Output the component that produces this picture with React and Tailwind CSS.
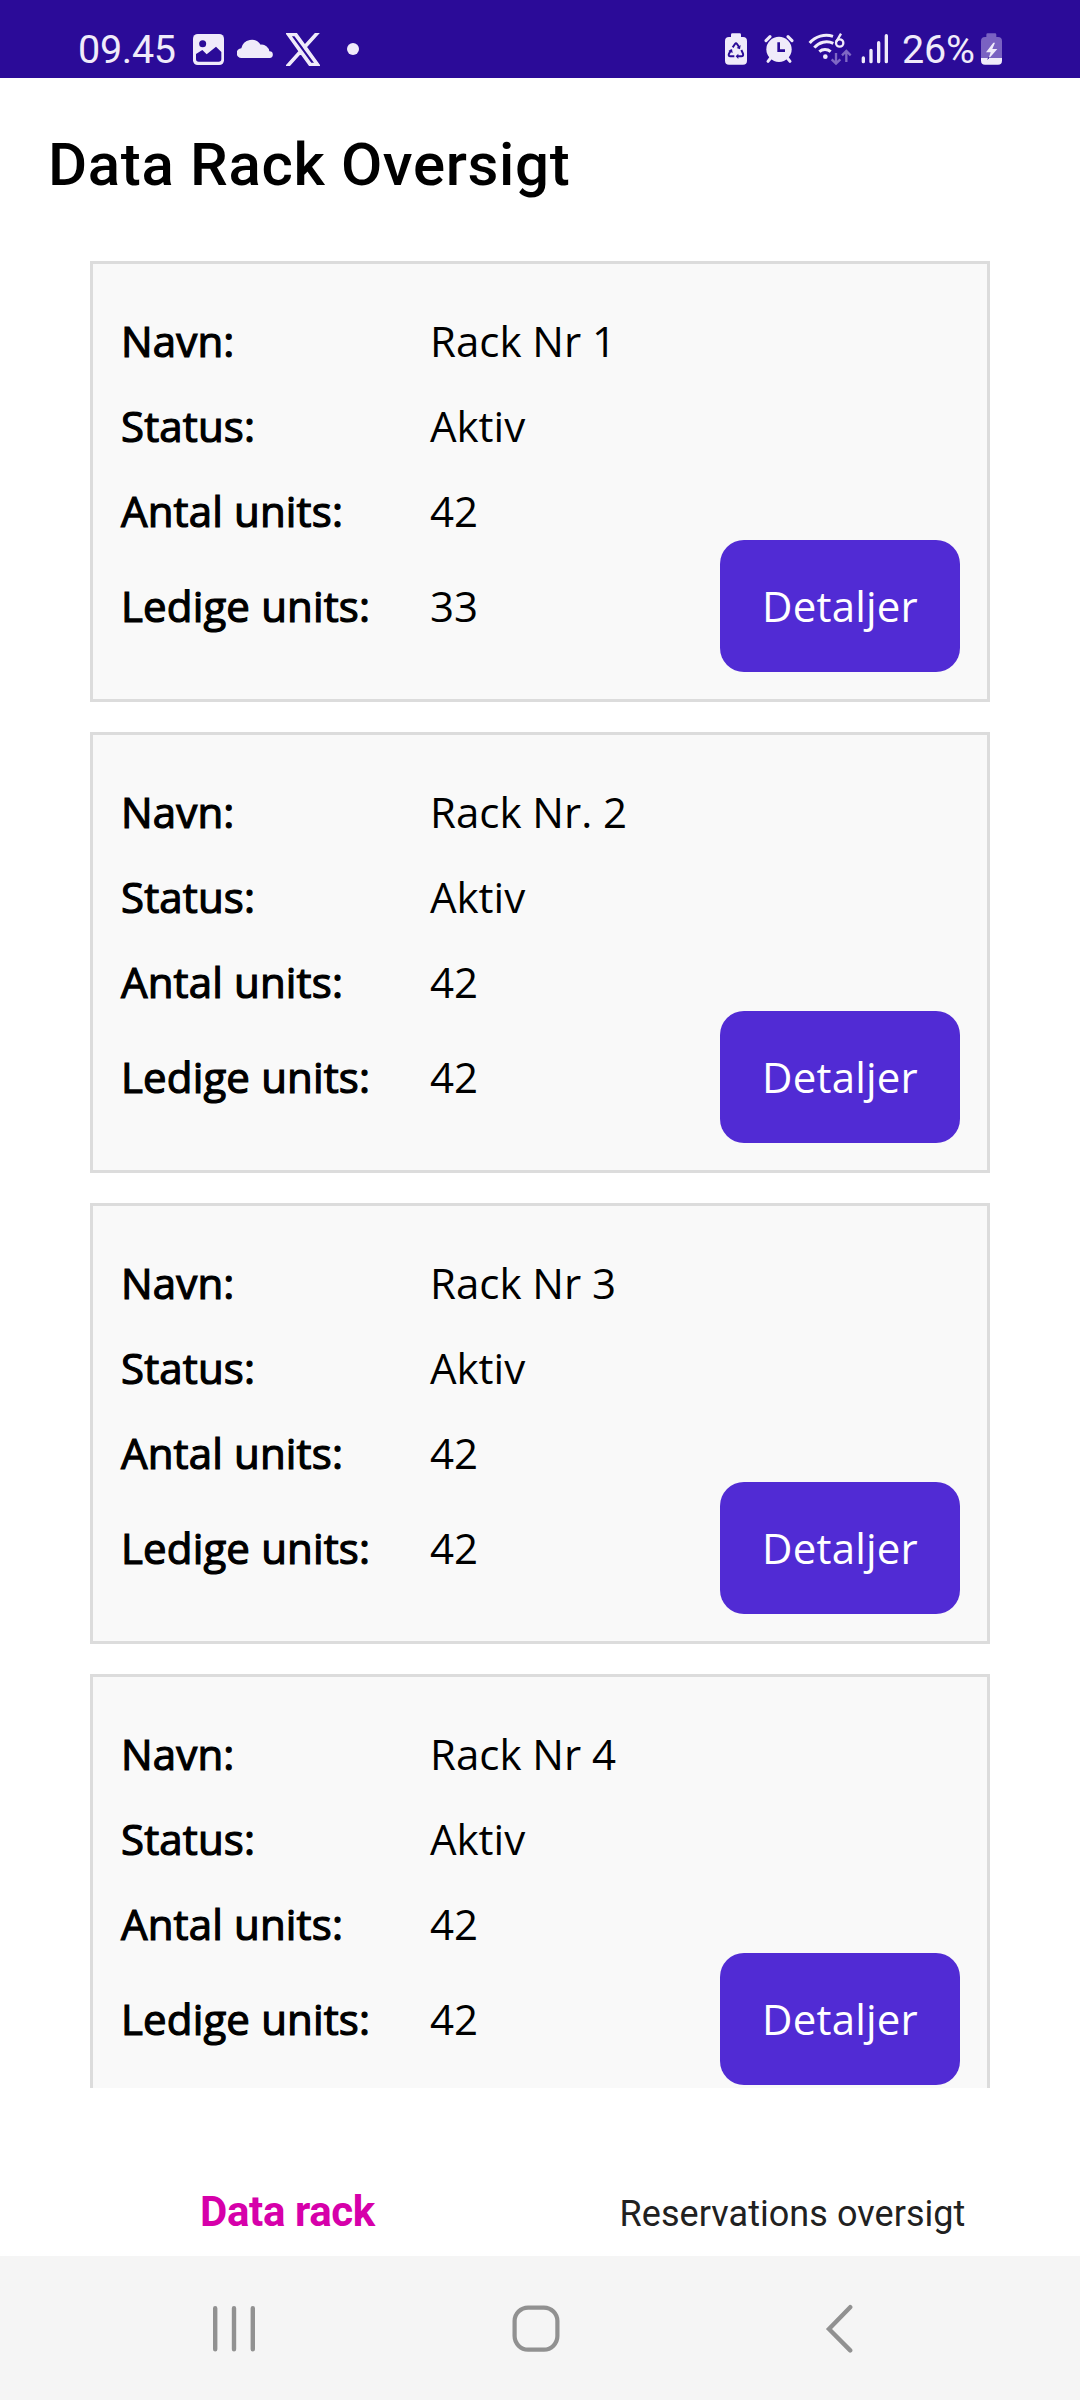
const racks = [
  { name: "Rack Nr 1", status: "Aktiv", units: 42, free: 33 },
  { name: "Rack Nr. 2", status: "Aktiv", units: 42, free: 42 },
  { name: "Rack Nr 3", status: "Aktiv", units: 42, free: 42 },
  { name: "Rack Nr 4", status: "Aktiv", units: 42, free: 42 },
];

const INK = "#f0ebfa";
const BAR = "#2b0b98";

function PhotoIcon() {
  return (
    <svg className="ml-[18px] mt-[34px] h-[31px] w-[31px] shrink-0" viewBox="0 0 93 93">
      <rect width="93" height="93" rx="14" fill={INK} />
      <circle cx="29" cy="29" r="10.5" fill={BAR} />
      <path d="M9 60 L28 48 L41 61 L69 38 L85 54 V75 Q85 83 77 83 H17 Q9 83 9 75 Z" fill={BAR} />
    </svg>
  );
}

function CloudIcon() {
  return (
    <svg className="ml-[13px] mt-[38px] h-5 w-9 shrink-0" viewBox="0 0 108 60" fill={INK}>
      <path d="M14 60 A14.5 14.5 0 0 1 13 31 A32 32 0 0 1 71 20 A23 23 0 0 1 97 40 A10 10 0 0 1 98 60 Z" />
    </svg>
  );
}

function XIcon() {
  return (
    <svg className="ml-[13px] mt-[33px] h-[33px] w-[34px] shrink-0" viewBox="-0.3 -0.3 24.6 24.6" preserveAspectRatio="none" fill={INK} stroke={INK} strokeWidth="1.1">
      <path d="M14.258 10.152L23.176 0h-2.113l-7.747 8.813L7.133 0H0l9.352 13.328L0 23.973h2.113l8.176-9.309 6.531 9.309h7.133zm-2.895 3.293l-.949-1.328L2.875 1.56h3.246l6.086 8.523.945 1.328 7.91 11.078h-3.246z" />
    </svg>
  );
}

function RecycleBatteryIcon() {
  return (
    <svg className="mt-[33px] h-8 w-[22px] shrink-0" viewBox="0 0 66 96">
      <path d="M18 12 V5 Q18 1 22 1 H44 Q48 1 48 5 V12 H54 Q66 12 66 24 V83 Q66 95 54 95 H12 Q0 95 0 83 V24 Q0 12 12 12 Z" fill={INK} />
      <g fill="none" stroke={BAR} strokeWidth="6" strokeLinejoin="round">
        <path d="M23 43 L30 33 Q33 29 36 33 L43 43" />
        <path d="M49 51 L54 62 Q56 70 49 70 H38" />
        <path d="M28 70 H16 Q9 70 12 62 L18 51" />
      </g>
      <path d="M47 36 L45 49 L35 45 Z M40 62 V78 L32 70 Z M10 54 L21 48 L23 60 Z" fill={BAR} />
    </svg>
  );
}

function AlarmIcon() {
  return (
    <svg className="ml-[17px] mt-[34px] h-[30px] w-[30px] shrink-0" viewBox="0 0 90 90">
      <circle cx="45" cy="46" r="38" fill={INK} />
      <g stroke={INK} strokeWidth="9" strokeLinecap="round">
        <path d="M6 20 L18 8" />
        <path d="M72 8 L84 20" />
        <path d="M20 72 L12 82" />
        <path d="M70 72 L78 82" />
      </g>
      <path d="M44 25 V50 H63" fill="none" stroke={BAR} strokeWidth="8" />
    </svg>
  );
}

function WifiIcon() {
  return (
    <svg className="ml-[14px] mt-[32px] h-[34px] w-[44px] shrink-0" viewBox="0 0 132 102" fill="none">
      <g stroke={INK} strokeWidth="9">
        <path d="M5 33 A66 66 0 0 1 75 13" />
        <path d="M19 47 A47 47 0 0 1 76 34" />
        <path d="M34 59 A26 26 0 0 1 68 59" />
      </g>
      <circle cx="52" cy="74" r="7" fill={INK} />
      <circle cx="95" cy="33" r="11" stroke={INK} strokeWidth="7" />
      <path d="M85 29 L99 5" stroke={INK} strokeWidth="7" />
      <g stroke="#7f68c4" strokeWidth="7">
        <path d="M84 63 V94 M71 82 L84 95 L97 82" />
        <path d="M115 90 V58 M102 70 L115 57 L128 70" />
      </g>
    </svg>
  );
}

function SignalIcon() {
  return (
    <svg className="ml-[9px] mt-[33px] h-[31px] w-[28px] shrink-0" viewBox="0 0 84 93" stroke={INK} strokeWidth="10" strokeLinecap="round">
      <path d="M7 75 V86 M30 52 V86 M53 29 V86 M76 8 V86" />
    </svg>
  );
}

function ChargingIcon() {
  return (
    <svg className="ml-[7px] mt-[33px] h-8 w-[21px] shrink-0" viewBox="0 0 63 96">
      <path d="M16 12 V5 Q16 1 20 1 H42 Q46 1 46 5 V12 H51 Q63 12 63 24 V76 H0 V24 Q0 12 12 12 Z" fill="#7a62c2" />
      <path d="M0 75 H63 V83 Q63 95 51 95 H12 Q0 95 0 83 Z" fill={INK} />
      <path d="M37 29 L15 58 H29 L22 79 L49 48 H34 L42 29 Z" fill={INK} />
      <path d="M20 79 L25 72" stroke={BAR} strokeWidth="3" />
    </svg>
  );
}

function StatusBar() {
  return (
    <div className="flex h-[78px] shrink-0 items-start bg-[#2b0b98] px-[78px] font-['Roboto',sans-serif] text-[39.5px] leading-[46px] text-[#f0ebfa]">
      <span className="mt-[27px] w-[97px] whitespace-nowrap tracking-[-0.3px]">09.45</span>
      <PhotoIcon />
      <CloudIcon />
      <XIcon />
      <span className="ml-[27px] mt-[43px] h-3 w-3 rounded-full bg-[#f0ebfa]" />
      <div className="ml-auto flex items-start">
        <RecycleBatteryIcon />
        <AlarmIcon />
        <WifiIcon />
        <SignalIcon />
        <span className="ml-[13px] mt-[27px] w-[72px] whitespace-nowrap tracking-[-0.2px]">26%</span>
        <ChargingIcon />
      </div>
    </div>
  );
}

function Label({ children }) {
  return (
    <span className="w-[309px] shrink-0 whitespace-nowrap tracking-[0.15px] [-webkit-text-stroke:1.2px_#000]">{children}</span>
  );
}

function Row({ label, value }) {
  return (
    <div className="flex h-[57px] items-center">
      <Label>{label}</Label>
      <span>{value}</span>
    </div>
  );
}

function RackCard({ rack }) {
  return (
    <article className="flex h-[441px] shrink-0 flex-col border-[3px] border-[#dcdcdc] bg-[#f9f9f9] pl-7 pr-[27px] pt-[48px]">
      <div className="flex flex-col gap-7">
        <Row label="Navn:" value={rack.name} />
        <Row label="Status:" value={rack.status} />
        <Row label="Antal units:" value={rack.units} />
      </div>
      <div className="mt-px flex h-[132px] items-center">
        <div className="flex pb-[2px]">
          <Label>Ledige units:</Label>
          <span>{rack.free}</span>
        </div>
        <button className="ml-auto h-[132px] w-[240px] rounded-[24px] bg-[#512bd4] pb-[2px] tracking-[0.2px] text-white">Detaljer</button>
      </div>
    </article>
  );
}

export default function App() {
  return (
    <div className="flex h-[2400px] w-[1080px] flex-col overflow-hidden bg-white text-black">
      <StatusBar />
      <header className="flex h-[168px] shrink-0 items-center pl-12 pt-1.5 font-['Roboto',sans-serif] text-[60px] font-medium leading-[70px]">
        <h1 className="whitespace-nowrap tracking-[0.65px]">Data Rack Oversigt</h1>
      </header>
      <main className="flex h-[1842px] shrink-0 flex-col gap-[30px] overflow-hidden px-[90px] pt-[15px] font-['Open_Sans',sans-serif] text-[42px] leading-[57px]">
        {racks.map((rack) => (
          <RackCard key={rack.name} rack={rack} />
        ))}
      </main>
      <nav className="flex h-[168px] shrink-0 items-end px-9 pb-[19px] font-['Roboto',sans-serif]">
        <a className="flex-1 pr-[2px] text-center text-[42px] font-bold leading-[50px] tracking-[-0.4px] text-[#d600aa]">Data rack</a>
        <a className="flex-1 text-center text-[36px] leading-[46px] tracking-[0.05px] text-[#212121]">Reservations oversigt</a>
      </nav>
      <footer className="flex h-36 shrink-0 items-center bg-[#f5f5f5] pl-[213px] pt-[2px]">
        <svg className="h-12 w-[42px]" viewBox="0 0 42 48" stroke="#919191" strokeWidth="4.4" strokeLinecap="round">
          <path d="M2.2 3.2 V44.3 M21 3.2 V44.3 M39.8 3.2 V44.3" />
        </svg>
        <svg className="ml-[257px] h-12 w-12" viewBox="0 0 48 48" fill="none" stroke="#919191" strokeWidth="4.2">
          <rect x="2.6" y="2.6" width="42.8" height="42" rx="13.5" />
        </svg>
        <svg className="ml-[265px] h-[50px] w-7" viewBox="0 0 28 50" fill="none" stroke="#919191" strokeWidth="4.4" strokeLinecap="round">
          <path d="M25.2 3.2 L4 25 L25.2 46.4" />
        </svg>
      </footer>
    </div>
  );
}
